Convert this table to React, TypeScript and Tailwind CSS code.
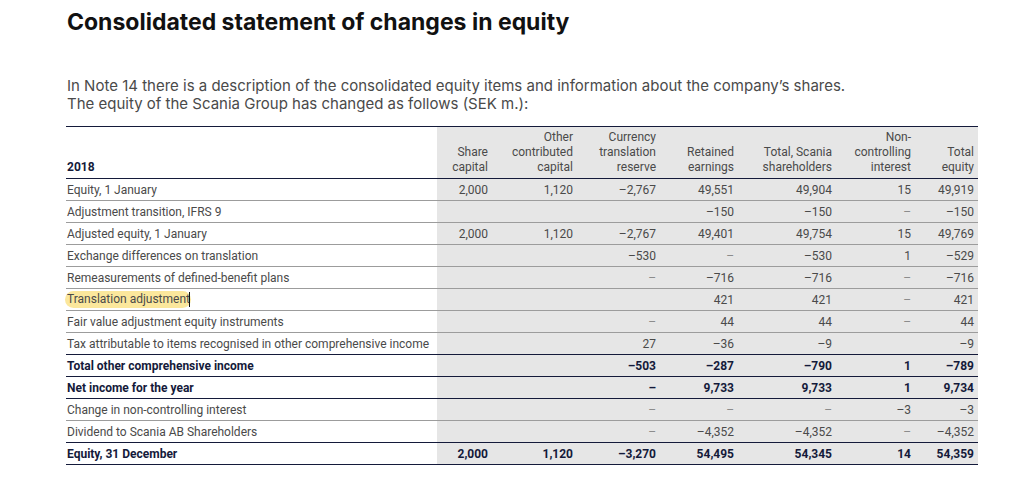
import React from "react";

type Row = {
  label: string;
  v: string[];
  bold?: boolean;
  line?: "navy" | "grey";
  mark?: boolean;
};

const heads = [
  ["Share", "capital"],
  ["Other", "contributed", "capital"],
  ["Currency", "translation", "reserve"],
  ["Retained", "earnings"],
  ["Total, Scania", "shareholders"],
  ["Non-", "controlling", "interest"],
  ["Total", "equity"],
];

const widths = ["w-[55px]", "w-[85px]", "w-[83px]", "w-[78px]", "w-[98px]", "w-[79px]", "w-[63px]"];

const rows: Row[] = [
  { label: "Equity, 1 January", v: ["2,000", "1,120", "–2,767", "49,551", "49,904", "15", "49,919"] },
  { label: "Adjustment transition, IFRS 9", v: ["", "", "", "–150", "–150", "–", "–150"] },
  { label: "Adjusted equity, 1 January", v: ["2,000", "1,120", "–2,767", "49,401", "49,754", "15", "49,769"] },
  { label: "Exchange differences on translation", v: ["", "", "–530", "–", "–530", "1", "–529"] },
  { label: "Remeasurements of defined-benefit plans", v: ["", "", "–", "–716", "–716", "–", "–716"] },
  { label: "Translation adjustment", v: ["", "", "", "421", "421", "–", "421"], mark: true },
  { label: "Fair value adjustment equity instruments", v: ["", "", "–", "44", "44", "–", "44"] },
  { label: "Tax attributable to items recognised in other comprehensive income", v: ["", "", "27", "–36", "–9", "", "–9"], line: "navy" },
  { label: "Total other comprehensive income", v: ["", "", "–503", "–287", "–790", "1", "–789"], bold: true, line: "navy" },
  { label: "Net income for the year", v: ["", "", "–", "9,733", "9,733", "1", "9,734"], bold: true, line: "navy" },
  { label: "Change in non-controlling interest", v: ["", "", "–", "–", "–", "–3", "–3"] },
  { label: "Dividend to Scania AB Shareholders", v: ["", "", "–", "–4,352", "–4,352", "–", "–4,352"], line: "navy" },
  { label: "Equity, 31 December", v: ["2,000", "1,120", "–3,270", "54,495", "54,345", "14", "54,359"], bold: true, line: "navy" },
];

function Cell({ text, bold, w }: { text: string; bold?: boolean; w: string }) {
  const dash = text === "–";
  const color = bold ? "text-[#141a3a] font-bold" : dash ? "text-[#8c8c8c]" : "text-[#4a4a4a]";
  return <div className={`${w} bg-[#e6e6e6] flex items-center justify-end pr-1 ${color}`}>{text}</div>;
}

export default function App() {
  return (
    <div className="bg-white min-h-screen pl-[66px] pt-[8px] font-['Inter',sans-serif]">
      <h1 className="text-[23px] leading-[28px] font-bold text-[#111] pl-px">
        Consolidated statement of changes in equity
      </h1>
      <p className="mt-[41px] text-[15px] leading-[18px] text-[#4a4a4a] pl-px">
        In Note 14 there is a description of the consolidated equity items and information about the company’s shares.
        <br />
        The equity of the Scania Group has changed as follows (SEK m.):
      </p>

      <div className="mt-[13px] w-[912px] font-['Roboto',sans-serif] text-[12px]">
        <div className="flex h-[53px] border-y border-[#141a3a]">
          <div className="w-[371px] flex items-end pb-[3px] pl-px font-bold text-[#141a3a] leading-[15px]">2018</div>
          {heads.map((h, i) => (
            <div key={i} className={`${widths[i]} bg-[#e6e6e6] flex flex-col justify-end items-end pr-1 pb-[3px] leading-[15px] text-[#4a4a4a]`}>
              {h.map((t) => (
                <span key={t}>{t}</span>
              ))}
            </div>
          ))}
        </div>
        {rows.map((r) => (
          <div
            key={r.label}
            className={`flex h-[22px] border-b ${r.line === "navy" ? "border-[#141a3a]" : "border-[#9c9c9c]"}`}
          >
            <div
              className={`w-[371px] flex items-center pl-px ${r.bold ? "font-bold text-[#141a3a]" : "text-[#4a4a4a]"}`}
            >
              {r.mark ? (
                <span className="flex items-center">
                  <span className="bg-[#fbe79c] rounded-full -ml-[2px] pl-[2px] pr-[1px] leading-[17px]">{r.label}</span>
                  <span className="w-px h-[15px] bg-[#111] -ml-[2px]" />
                </span>
              ) : (
                r.label
              )}
            </div>
            {r.v.map((t, i) => (
              <Cell key={i} text={t} bold={r.bold} w={widths[i]} />
            ))}
          </div>
        ))}
      </div>
    </div>
  );
}
